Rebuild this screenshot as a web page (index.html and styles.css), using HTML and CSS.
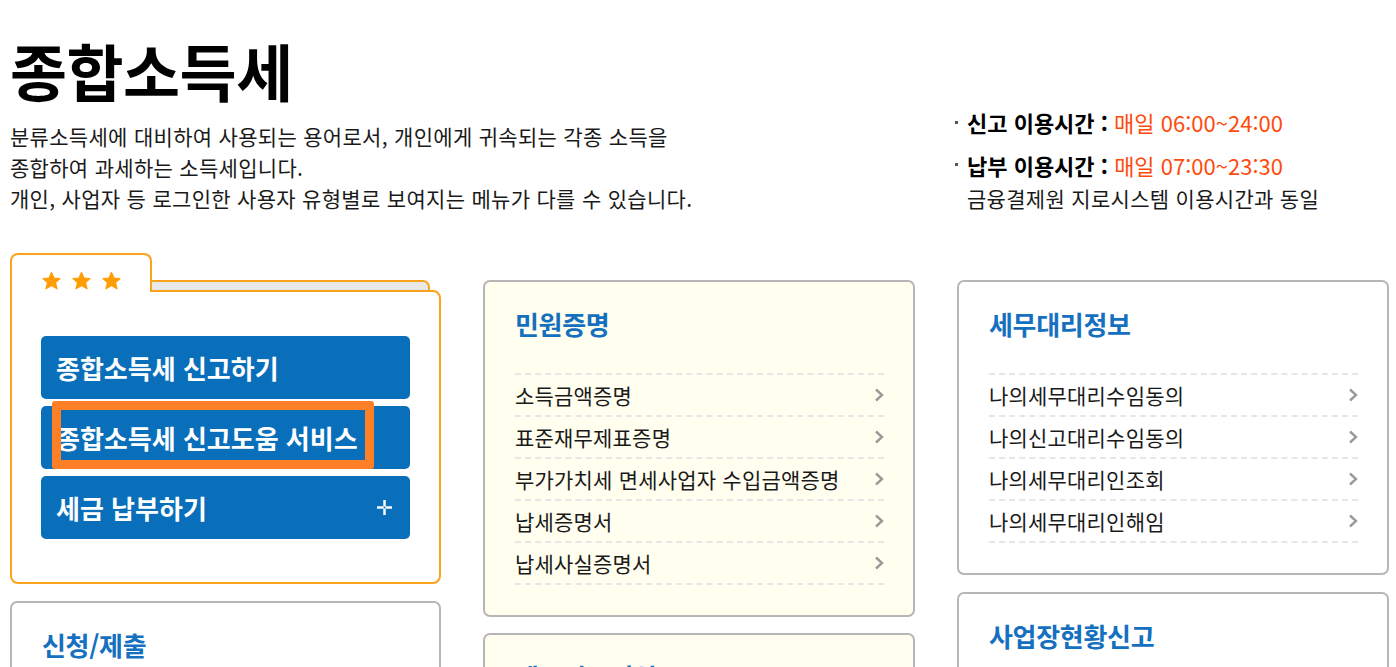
FILE: index.html
```html
<!DOCTYPE html>
<html lang="ko">
<head>
<meta charset="utf-8">
<title>종합소득세</title>
<link rel="stylesheet" href="styles.css">
</head>
<body>
<header class="top">
  <div class="intro">
    <h1 class="page-title">종합소득세</h1>
    <p class="desc">분류소득세에 대비하여 사용되는 용어로서, 개인에게 귀속되는 각종 소득을<br>종합하여 과세하는 소득세입니다.<br>개인, 사업자 등 로그인한 사용자 유형별로 보여지는 메뉴가 다를 수 있습니다.</p>
  </div>
  <ul class="hours">
    <li class="hours-item"><b>신고 이용시간 :</b> <span class="hl">매일 06:00~24:00</span></li>
    <li class="hours-item second"><b>납부 이용시간 :</b> <span class="hl">매일 07:00~23:30</span><br>금융결제원 지로시스템 이용시간과 동일</li>
  </ul>
</header>

<main class="grid">
  <div class="col">
    <section class="fav">
      <div class="fav-head">
        <div class="fav-tab">
          <svg class="star" viewBox="0 0 20 20"><path d="M10 1.5 L12.5 7 L18.5 7.5 L14 11.6 L15.5 17.8 L10 14.6 L4.5 17.8 L6 11.6 L1.5 7.5 L7.5 7 Z"/></svg>
          <svg class="star" viewBox="0 0 20 20"><path d="M10 1.5 L12.5 7 L18.5 7.5 L14 11.6 L15.5 17.8 L10 14.6 L4.5 17.8 L6 11.6 L1.5 7.5 L7.5 7 Z"/></svg>
          <svg class="star" viewBox="0 0 20 20"><path d="M10 1.5 L12.5 7 L18.5 7.5 L14 11.6 L15.5 17.8 L10 14.6 L4.5 17.8 L6 11.6 L1.5 7.5 L7.5 7 Z"/></svg>
        </div>
        <div class="fav-strip"></div>
      </div>
      <div class="fav-body">
        <a class="btn">종합소득세 신고하기</a>
        <a class="btn marked">종합소득세 신고도움 서비스<span class="mark"></span></a>
        <a class="btn">세금 납부하기
          <svg class="plus" viewBox="0 0 16 16"><rect x="6.7" y="0" width="2.6" height="16" fill="#fff"/><rect x="0" y="6.7" width="16" height="2.6" fill="#fff"/><rect x="7" y="7" width="2" height="2" fill="#0a6fbb"/></svg>
        </a>
      </div>
    </section>
    <section class="card">
      <h2 class="card-title">신청/제출</h2>
    </section>
  </div>

  <div class="col offset">
    <section class="card cream">
      <h2 class="card-title">민원증명</h2>
      <ul class="list">
        <li class="item">소득금액증명<svg class="chev" viewBox="0 0 10 14"><polyline points="2,1.5 8,7 2,12.5"/></svg></li>
        <li class="item">표준재무제표증명<svg class="chev" viewBox="0 0 10 14"><polyline points="2,1.5 8,7 2,12.5"/></svg></li>
        <li class="item">부가가치세 면세사업자 수입금액증명<svg class="chev" viewBox="0 0 10 14"><polyline points="2,1.5 8,7 2,12.5"/></svg></li>
        <li class="item">납세증명서<svg class="chev" viewBox="0 0 10 14"><polyline points="2,1.5 8,7 2,12.5"/></svg></li>
        <li class="item">납세사실증명서<svg class="chev" viewBox="0 0 10 14"><polyline points="2,1.5 8,7 2,12.5"/></svg></li>
      </ul>
    </section>
    <section class="card cream">
      <h2 class="card-title">세금신고서식</h2>
    </section>
  </div>

  <div class="col offset">
    <section class="card">
      <h2 class="card-title">세무대리정보</h2>
      <ul class="list">
        <li class="item">나의세무대리수임동의<svg class="chev" viewBox="0 0 10 14"><polyline points="2,1.5 8,7 2,12.5"/></svg></li>
        <li class="item">나의신고대리수임동의<svg class="chev" viewBox="0 0 10 14"><polyline points="2,1.5 8,7 2,12.5"/></svg></li>
        <li class="item">나의세무대리인조회<svg class="chev" viewBox="0 0 10 14"><polyline points="2,1.5 8,7 2,12.5"/></svg></li>
        <li class="item">나의세무대리인해임<svg class="chev" viewBox="0 0 10 14"><polyline points="2,1.5 8,7 2,12.5"/></svg></li>
      </ul>
    </section>
    <section class="card">
      <h2 class="card-title">사업장현황신고</h2>
    </section>
  </div>
</main>
</body>
</html>
```

FILE: styles.css
```css
* { box-sizing: border-box; }
html, body { margin: 0; padding: 0; }
body {
  background: #fff;
  color: #111;
  font-family: "Noto Sans CJK KR", "Noto Sans", sans-serif;
  overflow: hidden;
  width: 1396px;
  height: 667px;
}
ul { list-style: none; margin: 0; padding: 0; }

.top {
  display: grid;
  grid-template-columns: 431px 432px 432px;
  column-gap: 42px;
  padding: 35px 0 0 10px;
}
.intro { grid-column: 1 / 3; }
.page-title {
  margin: 0;
  font-size: 62px;
  line-height: 70px;
  font-weight: 700;
  color: #000;
  letter-spacing: -0.5px;
}
.desc {
  margin: 16px 0 0;
  font-size: 21px;
  line-height: 31px;
  color: #1a1a1a;
  letter-spacing: 0.3px;
}
.hours {
  align-self: end;
  margin-left: -2px;
  font-size: 22px;
  color: #1a1a1a;
}
.hours-item {
  position: relative;
  padding-left: 12px;
  line-height: 31px;
}
.hours-item::before {
  content: "";
  position: absolute;
  left: 0;
  top: 14px;
  width: 3px;
  height: 3px;
  background: #555;
}
.hours-item.second { margin-top: 11px; line-height: 32px; font-size: 21px; letter-spacing: 0.3px; }
.hours-item.second b, .hours-item.second .hl { font-size: 22px; letter-spacing: 0; }
.hours-item b { font-weight: 700; color: #000; }
.hl { color: #ff4a0d; }

.grid {
  display: grid;
  grid-template-columns: 431px 432px 432px;
  column-gap: 42px;
  padding-left: 10px;
  margin-top: 39px;
}
.col { display: flex; flex-direction: column; gap: 17px; }
.col.offset { margin-top: 27px; }
.col.offset:nth-child(2) { gap: 16px; }

/* favourites folder */
.fav-head { display: flex; align-items: flex-end; }
.fav-tab {
  position: relative;
  z-index: 1;
  width: 142px;
  height: 39px;
  margin-bottom: -2px;
  border: 2px solid #fba31d;
  border-bottom: 0;
  border-radius: 8px 8px 0 0;
  background: #fff;
  padding: 16px 0 0 29px;
  display: flex;
  gap: 9px;
}
.star { width: 21px; height: 20px; fill: #ff9d00; stroke: #ff9d00; stroke-width: 1.2; stroke-linejoin: round; }
.fav-strip {
  width: 278px;
  height: 10px;
  background: #e8e8e8;
  border-top: 2px solid #fba31d;
  border-right: 2px solid #fba31d;
  border-top-right-radius: 7px;
}
.fav-body {
  border: 2px solid #fba31d;
  border-radius: 0 8px 8px 8px;
  padding: 44px 29px 43px;
  display: flex;
  flex-direction: column;
  gap: 7px;
}
.btn {
  position: relative;
  display: flex;
  align-items: center;
  justify-content: space-between;
  height: 63px;
  padding: 0 18px 0 15px;
  background: #0a6fbb;
  border-radius: 5px;
  color: #fff;
  font-size: 26px;
  font-weight: 700;
}
.plus { width: 15px; height: 15px; }
.mark {
  position: absolute;
  left: 11px;
  top: -5px;
  width: 322px;
  height: 68px;
  border: 9px solid #ff7f27;
  border-radius: 3px;
}

/* cards */
.card {
  border: 2px solid #b6b6b6;
  border-radius: 7px;
  background: #fff;
  padding: 25px 29px 30px 30px;
  min-height: 120px;
}
.card.cream { background: #fffeef; }
.card-title {
  margin: 0;
  font-size: 26px;
  line-height: 34px;
  font-weight: 700;
  color: #1570bf;
  letter-spacing: -0.3px;
}
.list {
  margin-top: 32px;
  border-top: 2px dashed #e6e6e6;
}
.item {
  display: flex;
  justify-content: space-between;
  align-items: center;
  height: 42px;
  border-bottom: 2px dashed #e6e6e6;
  font-size: 21px;
  color: #1a1a1a;
  letter-spacing: 0.2px;
}
.chev { width: 10px; height: 14px; fill: none; stroke: #9a9a9a; stroke-width: 2.4; }
```
